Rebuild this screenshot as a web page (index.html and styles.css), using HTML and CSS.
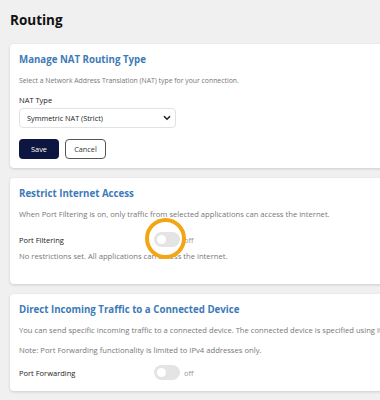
FILE: index.html
```html
<!DOCTYPE html>
<html lang="en">
<head>
    <meta charset="UTF-8">
    <meta name="viewport" content="width=device-width, initial-scale=1.0">
    <title>Routing</title>
    <link rel="stylesheet" href="styles.css">
</head>
<body>
    <div class="page">
        <h1>Routing</h1>

        <!-- NAT routing type -->
        <div class="card">
            <h2>Manage NAT Routing Type</h2>
            <p class="desc small">Select a Network Address Translation (NAT) type for your connection.</p>
            <label class="field-label">NAT Type</label>
            <div class="select">
                <span>Symmetric NAT (Strict)</span>
                <svg width="8" height="6" viewBox="0 0 8 6"><path d="M1 1.2l3 3 3-3" fill="none" stroke="#222" stroke-width="1.6"/></svg>
            </div>
            <div class="buttons">
                <button class="btn-save">Save</button>
                <button class="btn-cancel">Cancel</button>
            </div>
        </div>

        <!-- Port filtering -->
        <div class="card">
            <h2>Restrict Internet Access</h2>
            <p class="desc">When Port Filtering is on, only traffic from selected applications can access the internet.</p>
            <div class="row spaced">
                <span class="row-label">Port Filtering</span>
                <div class="toggle-wrap">
                    <span class="toggle"><span class="knob"></span></span>
                    <span class="ring"></span>
                </div>
                <span class="state">off</span>
            </div>
            <p class="desc note">No restrictions set. All applications can access the internet.</p>
        </div>

        <!-- Port forwarding -->
        <div class="card">
            <h2>Direct Incoming Traffic to a Connected Device</h2>
            <p class="desc">You can send specific incoming traffic to a connected device. The connected device is specified using its IP address.</p>
            <p class="desc">Note: Port Forwarding functionality is limited to IPv4 addresses only.</p>
            <div class="row">
                <span class="row-label">Port Forwarding</span>
                <div class="toggle-wrap">
                    <span class="toggle"><span class="knob"></span></span>
                </div>
                <span class="state">off</span>
            </div>
        </div>
    </div>
</body>
</html>
```

FILE: styles.css
```css
body {
    margin: 0;
    padding: 0;
    background-color: #f0f0f0;
    font-family: "Open Sans", Arial, sans-serif;
    overflow: hidden;
}

.page {
    width: 420px;
    padding: 0 0 0 10px;
}

h1 {
    font-size: 13.5px;
    font-weight: 700;
    color: #111;
    margin: 0;
    padding: 11px 0 15px 0;
    line-height: 18px;
}

.card {
    background-color: #ffffff;
    border-radius: 4px;
    box-shadow: 0 1px 3px rgba(0, 0, 0, 0.15);
    padding: 9px 9px 9px 9px;
    margin-bottom: 10px;
    white-space: nowrap;
}

h2 {
    font-size: 9.7px;
    font-weight: 700;
    color: #3d7ab8;
    margin: 0 0 8px 0;
    line-height: 14px;
}

.desc {
    font-size: 7.65px;
    color: #777;
    margin: 0 0 9px 0;
    line-height: 11px;
}

.desc.small {
    font-size: 6.85px;
}

.field-label {
    display: block;
    font-size: 7.5px;
    color: #222;
    line-height: 11px;
    margin-bottom: 2px;
}

.select {
    width: 157px;
    height: 20px;
    box-sizing: border-box;
    border: 1px solid #e2e2e2;
    border-radius: 4px;
    display: flex;
    align-items: center;
    justify-content: space-between;
    padding: 0 4px 0 7px;
    font-size: 7.3px;
    color: #222;
    margin-bottom: 11px;
}

.buttons {
    display: flex;
    gap: 6px;
}

.buttons button {
    font-family: "Open Sans", Arial, sans-serif;
    font-size: 7.3px;
    height: 20px;
    border-radius: 4px;
    padding: 0;
    cursor: pointer;
}

.btn-save {
    width: 40px;
    background-color: #0d1640;
    color: #ffffff;
    border: none;
}

.btn-cancel {
    width: 41px;
    background-color: #ffffff;
    color: #333;
    border: 1px solid #555;
}

.row {
    display: flex;
    align-items: center;
    margin-bottom: 2px;
}

.row.spaced {
    margin-top: 12px;
}

.row-label {
    width: 135px;
    font-size: 7.5px;
    color: #222;
}

.toggle-wrap {
    position: relative;
    width: 26px;
    height: 15px;
}

.toggle {
    display: block;
    width: 26px;
    height: 15px;
    border-radius: 8px;
    background-color: #e4e4e4;
    position: relative;
}

.knob {
    position: absolute;
    left: 3px;
    top: 3px;
    width: 9px;
    height: 9px;
    border-radius: 50%;
    background-color: #ffffff;
}

.ring {
    position: absolute;
    left: -9px;
    top: -14px;
    width: 33px;
    height: 33px;
    border: 4.5px solid #f3a614;
    border-radius: 50%;
}

.state {
    font-size: 7.5px;
    color: #999;
    margin-left: 4px;
}

.note {
    margin: 4px 0 13px 0;
}
```
